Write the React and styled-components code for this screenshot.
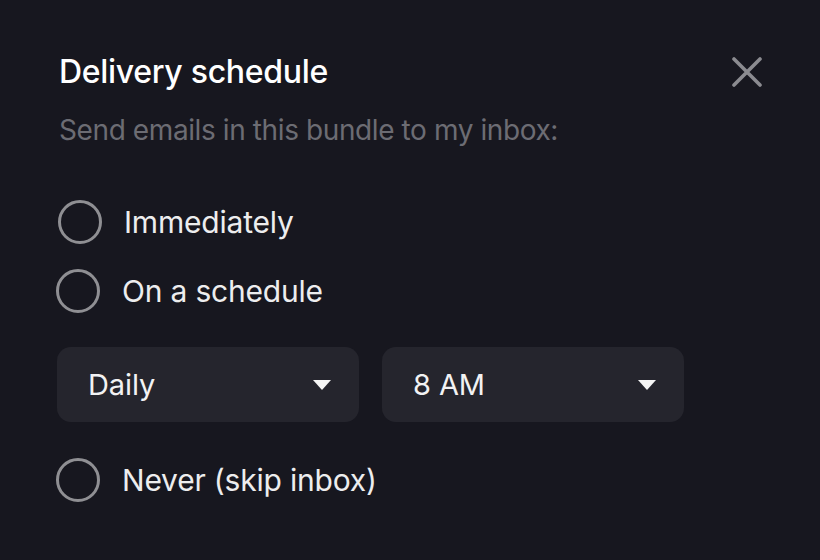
import React from 'react';
import styled, { createGlobalStyle } from 'styled-components';

const GlobalStyle = createGlobalStyle`
    html, body {
        margin: 0;
        padding: 0;
        background: #17171f;
    }
    body {
        font-family: Inter, "Noto Sans", sans-serif;
        -webkit-font-smoothing: antialiased;
    }
`;

const Sheet = styled.div`
    width: 820px;
    height: 560px;
    box-sizing: border-box;
    padding: 54px 58px 0 58px;
    display: flex;
    flex-direction: column;
    background: #17171f;
`;

const Header = styled.div`
    display: flex;
    align-items: center;
    justify-content: space-between;
    height: 36px;
`;

const Title = styled.h2`
    margin: 0 0 0 1px;
    color: #ffffff;
    font-size: 32px;
    line-height: 36px;
    font-weight: 500;
    letter-spacing: -0.3px;
`;

const CloseButton = styled.button`
    display: flex;
    align-items: center;
    justify-content: center;
    width: 30px;
    height: 30px;
    padding: 0;
    border: none;
    background: transparent;
    color: #8b8b90;
    cursor: pointer;
`;

const Subtitle = styled.p`
    margin: 25px 0 0 1px;
    color: #6c6c73;
    font-size: 28px;
    line-height: 30px;
    letter-spacing: -0.4px;
`;

const Option = styled.label`
    display: flex;
    align-items: center;
    gap: 22px;
    height: 44px;
    margin-top: ${p => p.top}px;
    margin-left: ${p => p.shift}px;
    color: #ededee;
    font-size: 30px;
    letter-spacing: -0.2px;
    cursor: pointer;
`;

const Circle = styled.span`
    box-sizing: border-box;
    width: 44px;
    height: 44px;
    flex: none;
    border-radius: 50%;
    border: 3px solid #8f8f93;
`;

const SelectRow = styled.div`
    display: flex;
    gap: 23px;
    margin-top: 34px;
    margin-left: -1px;
`;

const Select = styled.div`
    box-sizing: border-box;
    width: 302px;
    height: 75px;
    padding: 0 28px 0 31px;
    display: flex;
    align-items: center;
    justify-content: space-between;
    border-radius: 14px;
    background: #25252d;
    color: #f2f2f3;
    font-size: 29px;
    letter-spacing: -0.1px;
`;

const Caret = styled.span`
    width: 0;
    height: 0;
    border-left: 9px solid transparent;
    border-right: 9px solid transparent;
    border-top: 10px solid #f5f5f5;
`;

const Radio = ({ label, top, shift }) => (
    <Option top={top} shift={shift}>
        <Circle />
        {label}
    </Option>
);

export default function App() {
    return (
        <>
            <GlobalStyle />
            <Sheet>
                <Header>
                    <Title>Delivery schedule</Title>
                    <CloseButton aria-label="Close">
                        <svg width="30" height="30" viewBox="0 0 30 30" fill="none">
                            <path d="M2 2L28 28M28 2L2 28" stroke="currentColor" strokeWidth="3.6" strokeLinecap="round" />
                        </svg>
                    </CloseButton>
                </Header>
                <Subtitle>Send emails in this bundle to my inbox:</Subtitle>
                <Radio label="Immediately" top={55} shift={0} />
                <Radio label="On a schedule" top={25} shift={-2} />
                <SelectRow>
                    <Select>Daily<Caret /></Select>
                    <Select>8 AM<Caret /></Select>
                </SelectRow>
                <Radio label="Never (skip inbox)" top={36} shift={-2} />
            </Sheet>
        </>
    );
}
